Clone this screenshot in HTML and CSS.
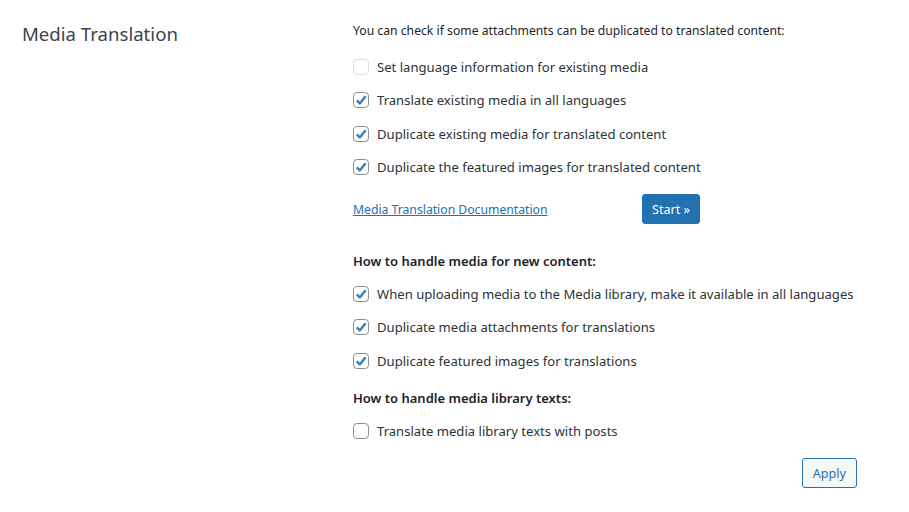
FILE: index.html
```html
<!DOCTYPE html>
<html lang="en">
<head>
    <meta charset="UTF-8">
    <title>Media Translation</title>
    <link rel="stylesheet" href="styles.css">
</head>
<body>
    <div class="settings-row">
        <h2 class="section-title">Media Translation</h2>

        <div class="section-body">
            <p class="intro">You can check if some attachments can be duplicated to translated content:</p>

            <label class="check disabled"><input type="checkbox" disabled> Set language information for existing media</label>
            <label class="check"><input type="checkbox" checked> Translate existing media in all languages</label>
            <label class="check"><input type="checkbox" checked> Duplicate existing media for translated content</label>
            <label class="check"><input type="checkbox" checked> Duplicate the featured images for translated content</label>

            <div class="doc-row">
                <a href="#" class="doc-link">Media Translation Documentation</a>
                <button class="button-primary">Start &raquo;</button>
            </div>

            <h4 class="sub-head first">How to handle media for new content:</h4>
            <label class="check"><input type="checkbox" checked> When uploading media to the Media library, make it available in all languages</label>
            <label class="check"><input type="checkbox" checked> Duplicate media attachments for translations</label>
            <label class="check"><input type="checkbox" checked> Duplicate featured images for translations</label>

            <h4 class="sub-head">How to handle media library texts:</h4>
            <label class="check"><input type="checkbox"> Translate media library texts with posts</label>

            <div class="actions">
                <button class="button-secondary">Apply</button>
            </div>
        </div>
    </div>
</body>
</html>
```

FILE: styles.css
```css
body {
    margin: 0;
    background: #fff;
    font-family: "Noto Sans", "Open Sans", sans-serif;
    font-size: 13px;
    color: #1d2327;
}
.settings-row {
    display: flex;
    padding: 20px 0 0 22px;
}
.section-title {
    width: 331px;
    margin: 0;
    font-size: 18.6px;
    font-weight: 400;
    line-height: 28px;
    color: #3c434a;
}
.section-body {
    width: 504px;
}
.intro {
    margin: 2px 0 10px;
    font-size: 12.2px;
    line-height: 18px;
}
.check {
    display: flex;
    align-items: center;
    height: 33.5px;
    font-size: 13.1px;
    color: #2c3338;
    white-space: nowrap;
}
.check input {
    appearance: none;
    width: 16px;
    height: 16px;
    margin: 0 8px 0 0;
    border: 1px solid #8c8f94;
    border-radius: 4px;
    background: #fff;
    box-sizing: border-box;
    flex: none;
}
.check input:checked {
    background: #fff url("data:image/svg+xml,%3Csvg xmlns='http://www.w3.org/2000/svg' viewBox='0 0 16 16'%3E%3Cpath d='M3.4 8.2l3.1 3.1 6-7.4' fill='none' stroke='%233582c4' stroke-width='2.6' stroke-linejoin='round'/%3E%3C/svg%3E") center / 15px no-repeat;
}
.check.disabled input {
    border-color: #dcdcde;
}
.doc-row {
    display: flex;
    align-items: center;
    justify-content: space-between;
    width: 347px;
    margin: 10px 0 0;
}
.doc-link {
    color: #2271b1;
    font-size: 12.2px;
}
.button-primary,
.button-secondary {
    height: 30px;
    padding: 0 9px;
    border-radius: 3px;
    font-family: inherit;
    font-size: 12.6px;
    cursor: pointer;
}
.button-primary {
    background: #2271b1;
    border: 1px solid #2271b1;
    color: #fff;
}
.sub-head {
    margin: 11px 0 8px;
    font-size: 13px;
    line-height: 18px;
    font-weight: 600;
    color: #1d2327;
}
.sub-head.first {
    margin: 28px 0 7px;
}
.actions {
    display: flex;
    justify-content: flex-end;
    margin-top: 10px;
}
.button-secondary {
    padding: 0 10px;
    background: #f6f7f7;
    border: 1px solid #2271b1;
    color: #2271b1;
}
```
